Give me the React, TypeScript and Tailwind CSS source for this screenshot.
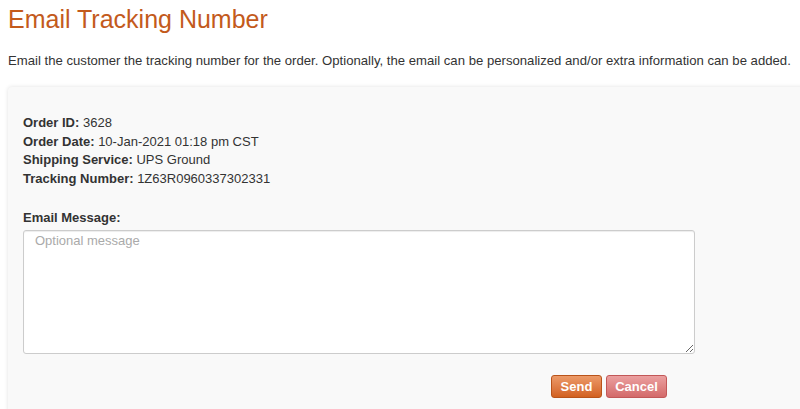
import React from "react";

export default function App() {
  return (
    <div
      className="w-[800px] h-[409px] overflow-hidden bg-white text-[#333]"
      style={{ fontFamily: '"Liberation Sans", Arial, sans-serif' }}
    >
      <div className="px-2 pt-[5px]">
        <h1 className="text-[25px] leading-[28px] text-[#c35a1c] font-normal">Email Tracking Number</h1>
        <p className="mt-[18px] text-[13.15px] leading-[20px] text-[#333] whitespace-nowrap">
          Email the customer the tracking number for the order. Optionally, the email can be personalized and/or extra information can be added.
        </p>
      </div>
      <div className="ml-2 mt-[16px] w-[820px] h-[340px] rounded-[4px] bg-[#f9f9f9] shadow-[0_0_4px_rgba(0,0,0,0.12)] pl-[15px] pt-[27px]">
        <div className="text-[13px] leading-[18.5px]">
          <div><span className="font-bold">Order ID:</span> 3628</div>
          <div><span className="font-bold">Order Date:</span> 10-Jan-2021 01:18 pm CST</div>
          <div><span className="font-bold">Shipping Service:</span> UPS Ground</div>
          <div><span className="font-bold">Tracking Number:</span> 1Z63R0960337302331</div>
        </div>
        <div className="mt-[21px] text-[13px] leading-[18px] font-bold">Email Message:</div>
        <textarea
          placeholder="Optional message"
          className="block mt-[3px] w-[672px] h-[124px] rounded-[3px] border border-[#ccc] bg-white px-[11px] pt-[1px] text-[13px] leading-[18px] placeholder:text-[#aaa] shadow-[inset_0_1px_1px_rgba(0,0,0,0.075)] outline-none"
          style={{ fontFamily: '"Liberation Sans", Arial, sans-serif' }}
        />
        <div className="flex gap-[4px] mt-[21px] ml-[528px]">
          <button className="h-[23px] w-[51px] rounded-[3px] border border-[#b9531a] bg-gradient-to-b from-[#ec9a68] to-[#d2611f] text-white text-[13px] font-bold leading-[20px]">
            Send
          </button>
          <button className="h-[23px] w-[61px] rounded-[3px] border border-[#c25858] bg-gradient-to-b from-[#eba0a0] to-[#d36a6a] text-white text-[13px] font-bold leading-[20px]">
            Cancel
          </button>
        </div>
      </div>
    </div>
  );
}
